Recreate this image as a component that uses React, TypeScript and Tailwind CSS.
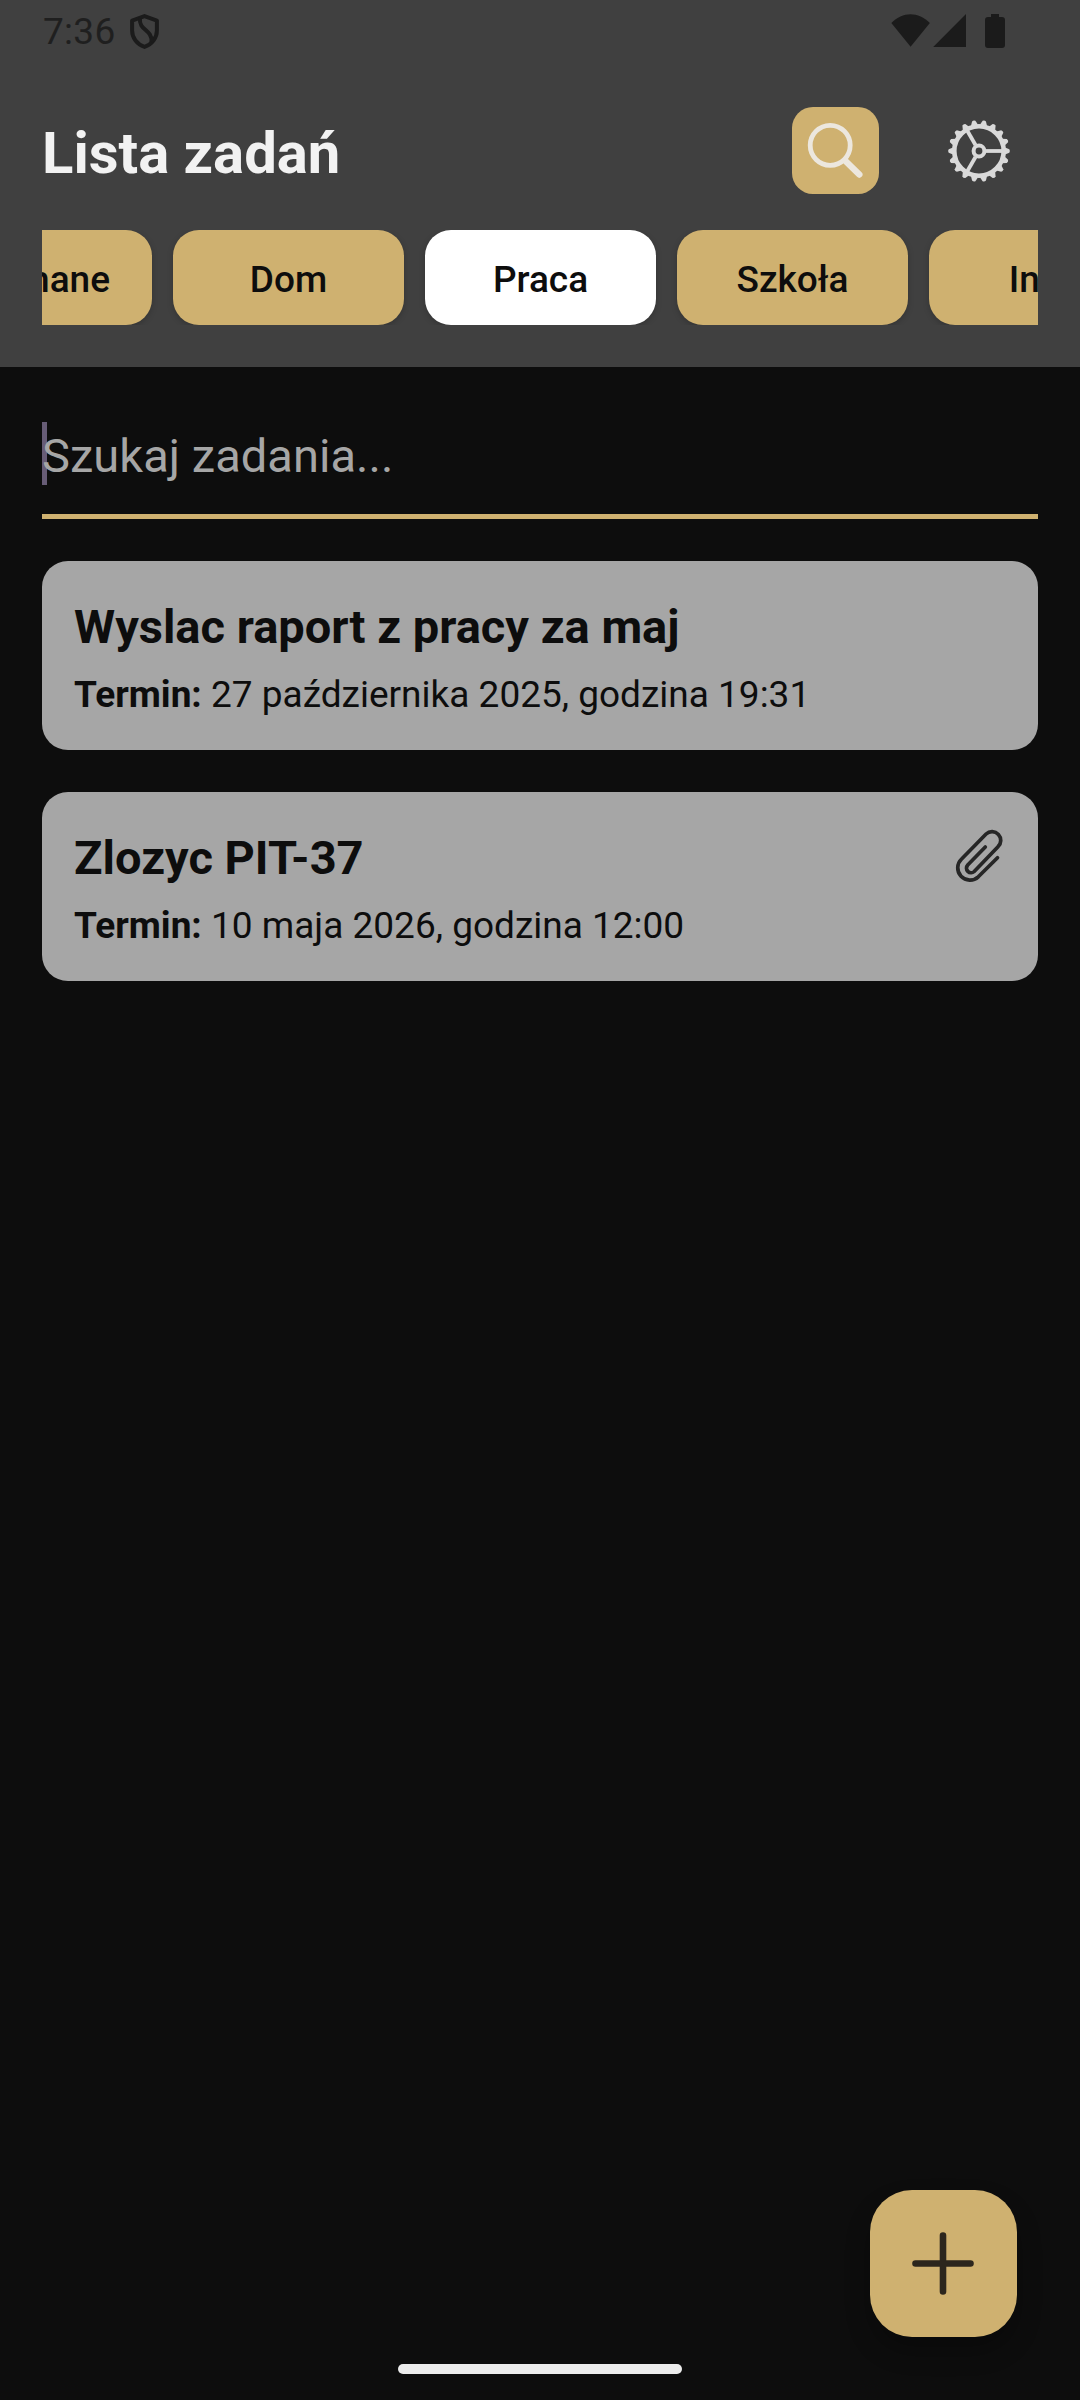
import React from "react";

const TEETH = Array.from({ length: 18 }, (_, i) => i * 20);

function ShieldIcon() {
  return (
    <svg className="h-[35px] w-[29px]" viewBox="130 14 29 35" fill="none" stroke="#1b1b1b" strokeWidth="4">
      <path d="M144.5 16.1 L156.9 20.6 V30.5 C156.9 38 152 44.4 144.5 46.9 C137 44.4 132.1 38 132.1 30.5 V20.6 Z" strokeLinejoin="round" />
      <path d="M140 18 C138.5 31 152.500 29 151.500 42" />
    </svg>
  );
}

function StatusIcons() {
  return (
    <svg className="h-[36px] w-[116px]" viewBox="890 13 116 36" fill="#1b1b1b">
      <path d="M891.300 22.900 C902.500 11.200 918.500 11.200 929.900 22.900 L910.600 46.800 Z" />
      <path d="M933.200 46.900 H966 V14 Z" />
      <path d="M991 14 H999 V17 H1002 Q1005 17 1005 20 V45 Q1005 48 1002 48 H988 Q985 48 985 45 V20 Q985 17 988 17 H991 Z" />
    </svg>
  );
}

function SearchIcon() {
  return (
    <svg className="size-[87px]" viewBox="0 0 87 87" fill="none" stroke="#ece7de">
      <circle cx="38.200" cy="38.300" r="20" strokeWidth="4.800" />
      <path d="M54 54.500 L67.300 67.500" strokeWidth="6.400" strokeLinecap="round" />
    </svg>
  );
}

function GearIcon() {
  return (
    <svg className="size-[64px]" viewBox="-32 -32 64 64" fill="none" stroke="#d9d9d9">
      <circle r="24.700" strokeWidth="4.600" />
      <circle r="5.400" strokeWidth="4" />
      {[0, 120, 240].map((a) => (
        <path key={a} d="M7 0 H24" strokeWidth="3.800" transform={`rotate(${a})`} />
      ))}
      {TEETH.map((a) => (
        <path key={a} d="M26 -3.600 L30.300 -1.700 Q31.500 0 30.300 1.700 L26 3.600 Z" fill="#d9d9d9" stroke="none" transform={`rotate(${a})`} />
      ))}
    </svg>
  );
}

function PaperclipIcon() {
  return (
    <svg className="h-[54px] w-[48px]" viewBox="955 829 48 54" fill="none" stroke="#262626" strokeWidth="3.700" strokeLinecap="round" strokeLinejoin="round">
      <path d="M985.300 847 L967.700 865 A4.600 4.600 0 0 0 974.200 871.500 L998 846.700 A8.300 8.300 0 0 0 986.100 834 L961.600 859 A11.700 11.700 0 0 0 978.300 876.800 L997.500 857.800" />
    </svg>
  );
}

function PlusIcon() {
  return (
    <svg className="size-[63px]" viewBox="0 0 63 63" fill="none" stroke="#2c261d" strokeWidth="6.600" strokeLinecap="round">
      <path d="M31 3.500 V59.500 M3.500 31.500 H58.500" />
    </svg>
  );
}

function Chip({ label, active = false }: { label: string; active?: boolean }) {
  return (
    <button
      className={`flex h-[95px] min-w-[231px] shrink-0 items-center justify-center rounded-[26px] px-[42px] text-[37px] leading-[43px] font-medium text-[#0d0d0d] shadow-[0_2px_6px_rgba(0,0,0,0.2)] ${active ? "bg-white" : "bg-[#cfb170]"}`}
    >
      <span className="pt-[3px]">{label}</span>
    </button>
  );
}

function TaskCard({ title, due, attachment = false }: { title: string; due: string; attachment?: boolean }) {
  return (
    <article className="flex h-[189px] items-start justify-between rounded-[26px] bg-[#a6a6a6] pt-[37px] pr-[35px] pl-[32px] text-[#0d0d0d]">
      <div className="pt-px">
        <h2 className="text-[47px] leading-[56px] font-bold whitespace-nowrap">{title}</h2>
        <p className="mt-[18px] text-[37px] leading-[43px] whitespace-nowrap">
          <b>Termin:</b> {due}
        </p>
      </div>
      {attachment && <PaperclipIcon />}
    </article>
  );
}

export default function App() {
  return (
    <div className="relative flex h-[2400px] w-[1080px] flex-col overflow-hidden bg-[#0d0d0d] font-[Roboto,sans-serif]">
      <header className="flex h-[367px] flex-col bg-[#404040]">
        <div className="flex h-[62px] items-center justify-between pr-[74px] pl-[43px]">
          <div className="flex items-center gap-[15px] text-[37px] leading-[43px] text-[#1f1f1f]">
            <span className="w-[72px] tracking-[0.3px]">7:36</span>
            <ShieldIcon />
          </div>
          <StatusIcons />
        </div>
        <div className="mt-[45px] flex h-[87px] items-center pr-[69px] pl-[42px]">
          <h1 className="flex-1 pt-[4px] text-[58px] leading-[68px] font-bold text-[#f2f2f2]">Lista zadań</h1>
          <button className="size-[87px] rounded-[21px] bg-[#cfb170]">
            <SearchIcon />
          </button>
          <button className="ml-[68px]">
            <GearIcon />
          </button>
        </div>
        <nav className="mx-[42px] mt-[36px] flex h-[95px] gap-[21px] overflow-hidden">
          <div className="flex w-[110px] shrink-0 justify-end">
            <Chip label="Niewykonane" />
          </div>
          <Chip label="Dom" />
          <Chip label="Praca" active />
          <Chip label="Szkoła" />
          <Chip label="Inne" />
        </nav>
      </header>

      <main className="flex flex-1 flex-col gap-[42px] px-[42px]">
        <div className="relative h-[152px] border-b-[5px] border-[#cfb170]">
          <div className="absolute top-[55px] left-0 h-[63px] w-[5px] bg-[#675c76]" />
          <p className="relative pt-[61px] text-[47px] leading-[56px] tracking-[0.05px] text-[#a6a6a6]">Szukaj zadania...</p>
        </div>
        <TaskCard title="Wyslac raport z pracy za maj" due="27 października 2025, godzina 19:31" />
        <TaskCard title="Zlozyc PIT-37" due="10 maja 2026, godzina 12:00" attachment />
      </main>

      <button className="absolute right-[63px] bottom-[63px] flex size-[147px] items-center justify-center rounded-[42px] bg-[#cfb170] shadow-[0_14px_24px_rgba(0,0,0,0.25)]">
        <PlusIcon />
      </button>
      <footer className="flex h-[36px] justify-center">
        <div className="h-[10px] w-[284px] rounded-full bg-[#ececec]" />
      </footer>
    </div>
  );
}
